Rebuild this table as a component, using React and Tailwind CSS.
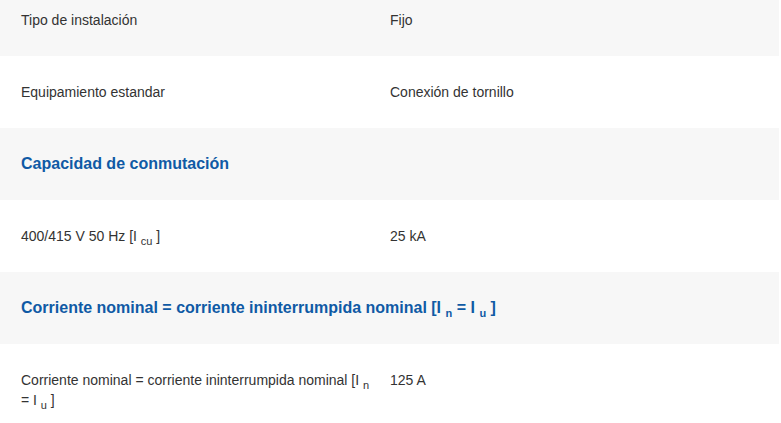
import React from "react";

function Row({ label, value, gray, first }) {
  return (
    <div
      className={`grid grid-cols-[370px_1fr] ${gray ? "bg-[#f7f7f7]" : "bg-white"} ${first ? "pt-[10px] pb-[26px]" : "py-[26px]"}`}
    >
      <div className="pl-[21px] pr-0 leading-[20px]">{label}</div>
      <div className="pl-[20px] leading-[20px]">{value}</div>
    </div>
  );
}

function Heading({ children }) {
  return (
    <div className="bg-[#f7f7f7] py-[26px] pl-[21px] text-[16px] font-bold leading-[20px] text-[#0f5aa5]">
      {children}
    </div>
  );
}

const Sub = ({ children }) => (
  <span className="relative top-[4px] align-baseline text-[11px] leading-none">{children}</span>
);

export default function App() {
  return (
    <div
      className="w-[779px] text-[14px] text-[#333333]"
      style={{ fontFamily: '"Liberation Sans", Arial, sans-serif' }}
    >
      <Row first gray label="Tipo de instalación" value="Fijo" />
      <Row label="Equipamiento estandar" value="Conexión de tornillo" />
      <Heading>Capacidad de conmutación</Heading>
      <Row
        label={
          <>
            400/415 V 50 Hz [I <Sub>cu</Sub> ]
          </>
        }
        value="25 kA"
      />
      <Heading>
        Corriente nominal = corriente ininterrumpida nominal [I <Sub>n</Sub> = I <Sub>u</Sub> ]
      </Heading>
      <Row
        label={
          <>
            Corriente nominal = corriente ininterrumpida nominal [I <Sub>n</Sub> = I <Sub>u</Sub> ]
          </>
        }
        value="125 A"
      />
    </div>
  );
}
